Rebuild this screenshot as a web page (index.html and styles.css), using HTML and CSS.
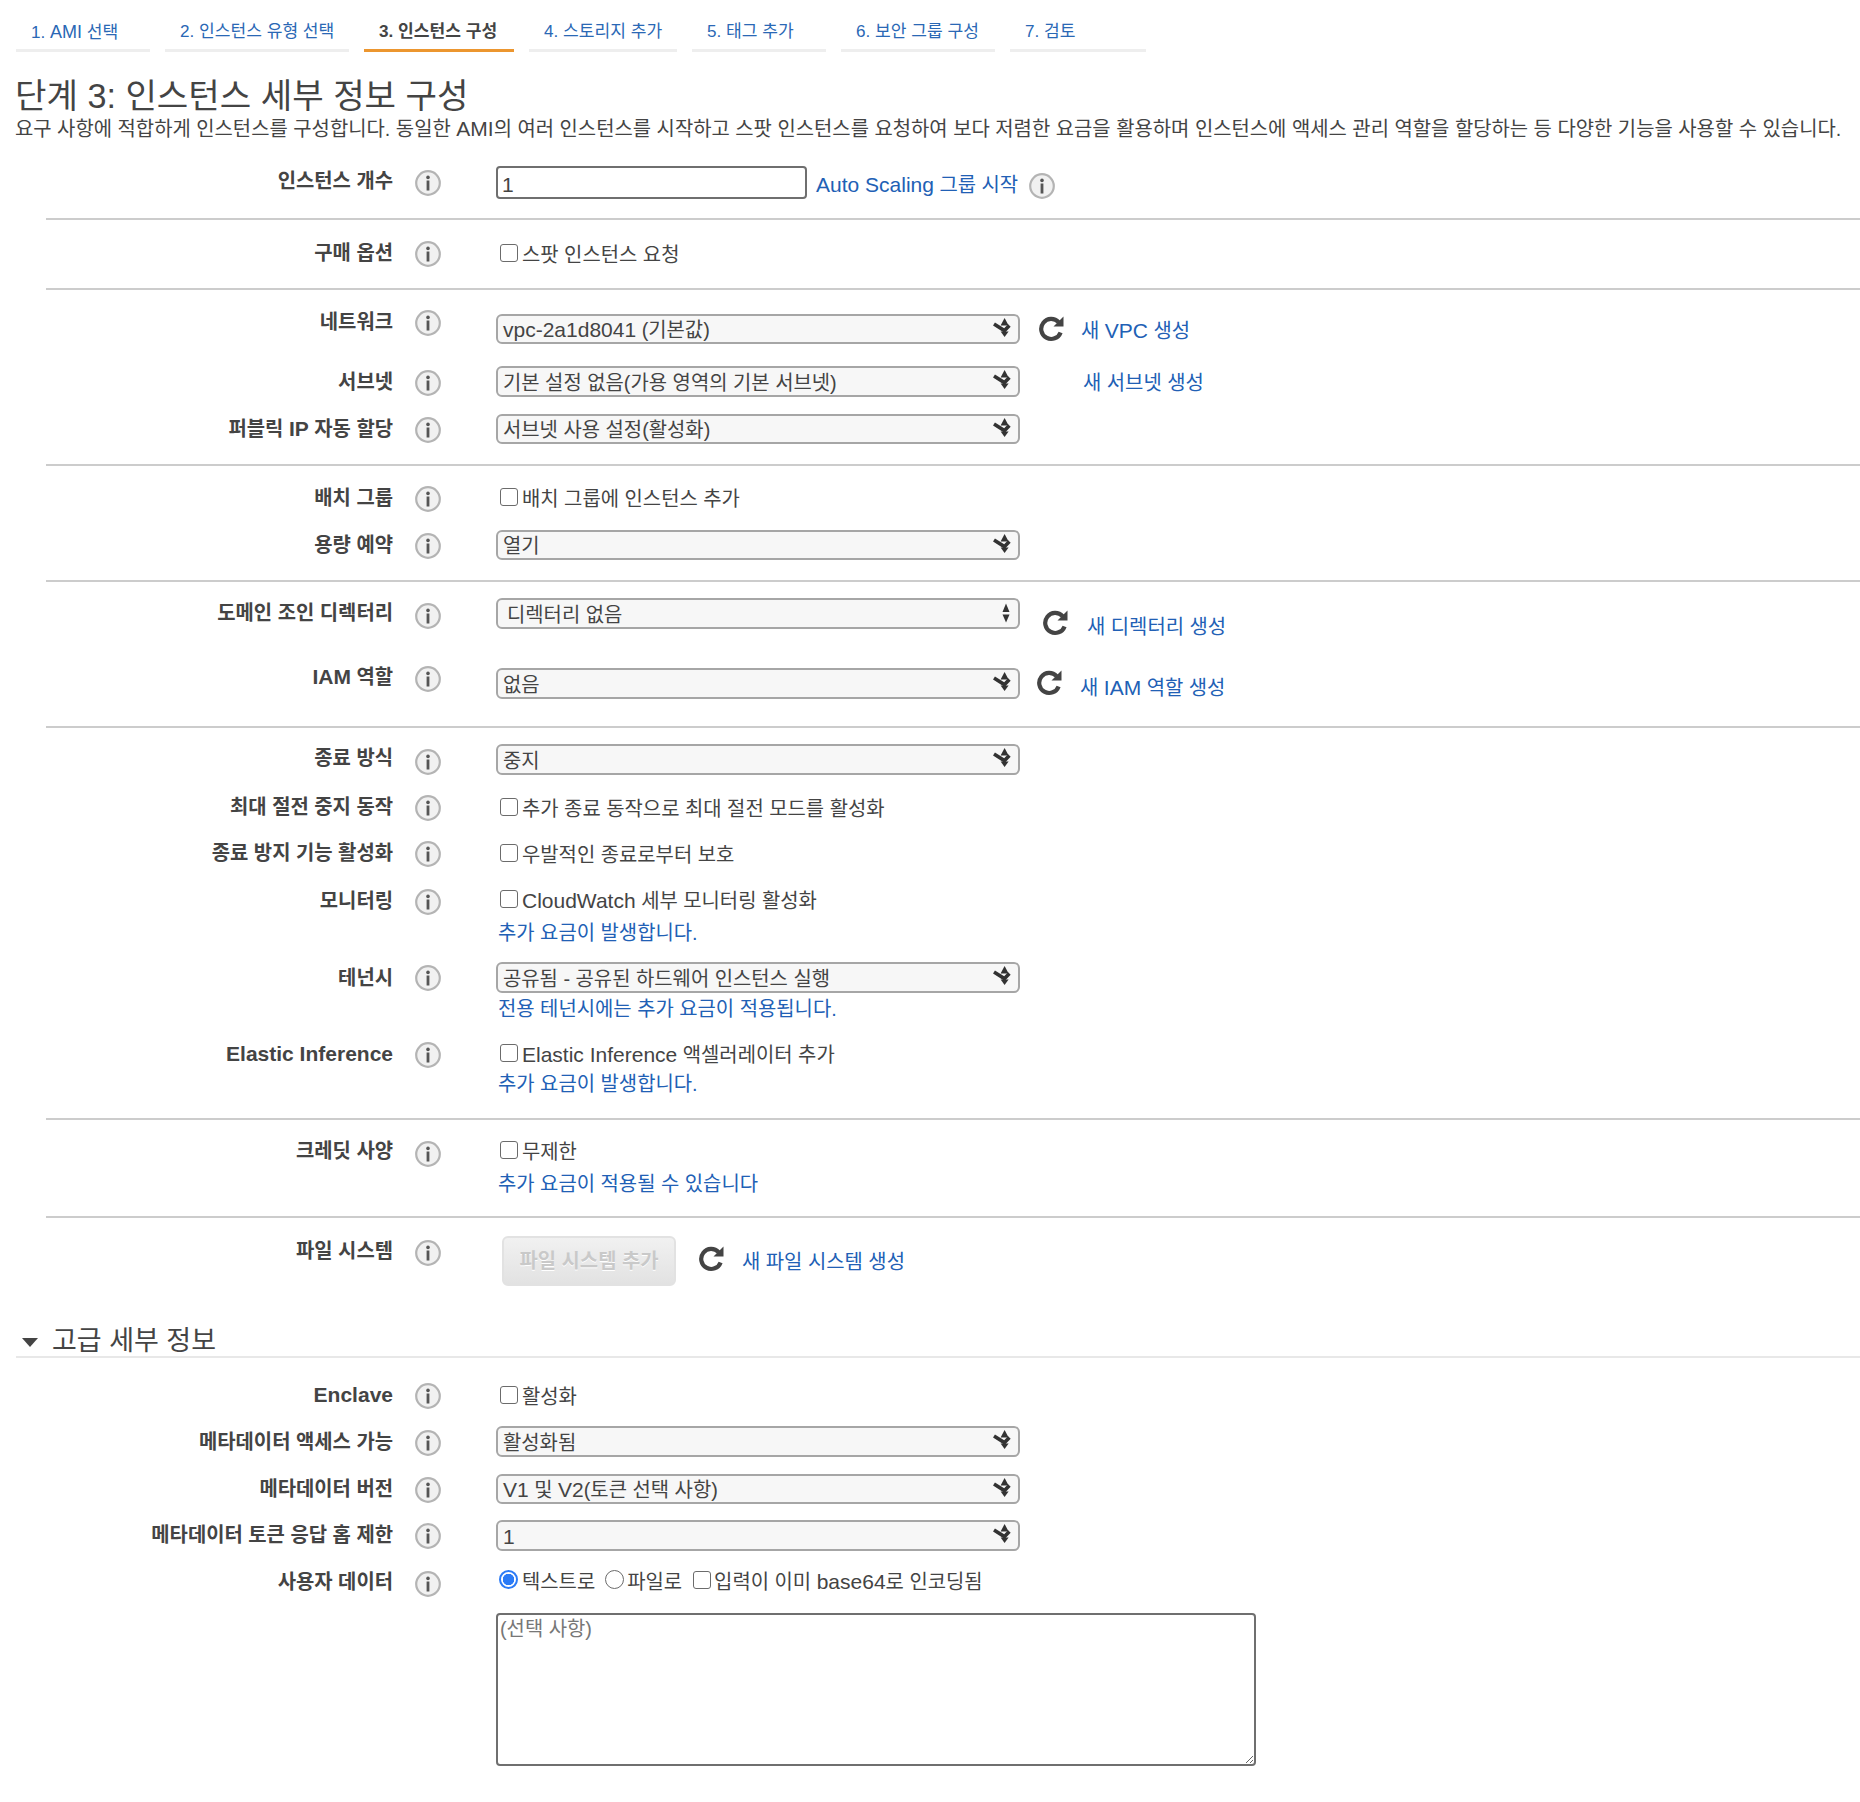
FILE: index.html
```html
<!DOCTYPE html>
<html lang="ko">
<head>
<meta charset="utf-8">
<title>인스턴스 구성</title>
<link rel="stylesheet" href="styles.css">
</head>
<body>
<svg class="defs" width="0" height="0" aria-hidden="true">
  <symbol id="info" viewBox="0 0 26 26">
    <circle cx="13" cy="13" r="11.8" fill="#f1f1f1" stroke="#b4b4b4" stroke-width="2.2"/>
    <circle cx="13" cy="7.4" r="1.8" fill="#555"/>
    <rect x="11.6" y="10.5" width="2.8" height="10" fill="#555"/>
  </symbol>
  <symbol id="refresh" viewBox="0 0 27 27">
    <path d="M20.6 7.2A10 10 0 1 0 22.6 17.4" fill="none" stroke="#444" stroke-width="4.2"/>
    <polygon points="25.5,1.5 25.5,11.5 15.5,11.5" fill="#444"/>
  </symbol>
  <symbol id="arrows" viewBox="0 0 18 19">
    <polygon points="7.6,7.4 11.6,0 15.6,7.4" fill="#333"/>
    <polygon points="7.6,13.5 15.6,13.5 11.6,19" fill="#333"/>
    <path d="M1 6L11.4 12.6L16.4 7.6" fill="none" stroke="#333" stroke-width="3.6"/>
  </symbol>
  <symbol id="updown" viewBox="0 0 8 20">
    <polygon points="0.5,9 4,0.5 7.5,9" fill="#333"/>
    <polygon points="0.5,11.5 7.5,11.5 4,19.5" fill="#333"/>
  </symbol>
</svg>

<nav class="tabs">
  <a class="tab" href="#">1. <span class="en-t">AMI</span> 선택</a>
  <a class="tab" href="#">2. 인스턴스 유형 선택</a>
  <a class="tab tab-current" href="#">3. 인스턴스 구성</a>
  <a class="tab" href="#">4. 스토리지 추가</a>
  <a class="tab" href="#">5. 태그 추가</a>
  <a class="tab" href="#">6. 보안 그룹 구성</a>
  <a class="tab" href="#">7. 검토</a>
</nav>

<header class="intro">
  <h1>단계 3: 인스턴스 세부 정보 구성</h1>
  <p>요구 사항에 적합하게 인스턴스를 구성합니다. 동일한 <span class="en">AMI</span>의 여러 인스턴스를 시작하고 스팟 인스턴스를 요청하여 보다 저렴한 요금을 활용하며 인스턴스에 액세스 관리 역할을 할당하는 등 다양한 기능을 사용할 수 있습니다.</p>
</header>

<main class="form">
  <div class="row r1">
    <div class="lab">인스턴스 개수</div>
    <svg class="ico"><use href="#info"/></svg>
    <div class="ctl inline">
      <input class="num" type="text" value="1">
      <a class="link link-as" href="#"><span class="en">Auto Scaling</span> 그룹 시작</a>
      <svg class="ico ico-as"><use href="#info"/></svg>
    </div>
  </div>
  <hr class="rule">
  <div class="row r2">
    <div class="lab">구매 옵션</div>
    <svg class="ico"><use href="#info"/></svg>
    <label class="ctl chk"><input type="checkbox"><span>스팟 인스턴스 요청</span></label>
  </div>
  <hr class="rule">
  <div class="row r3">
    <div class="lab">네트워크</div>
    <svg class="ico"><use href="#info"/></svg>
    <div class="ctl inline">
      <div class="sel" role="combobox"><span class="val"><span class="en">vpc-2a1d8041</span> (기본값)</span><svg class="arr"><use href="#arrows"/></svg></div>
      <svg class="refresh rf-net"><use href="#refresh"/></svg>
      <a class="link lk-net" href="#">새 <span class="en">VPC</span> 생성</a>
    </div>
  </div>
  <div class="row r4">
    <div class="lab">서브넷</div>
    <svg class="ico"><use href="#info"/></svg>
    <div class="ctl inline">
      <div class="sel sel-tall" role="combobox"><span class="val">기본 설정 없음(가용 영역의 기본 서브넷)</span><svg class="arr"><use href="#arrows"/></svg></div>
      <a class="link lk-sub" href="#">새 서브넷 생성</a>
    </div>
  </div>
  <div class="row r5">
    <div class="lab">퍼블릭 <span class="en">IP</span> 자동 할당</div>
    <svg class="ico"><use href="#info"/></svg>
    <div class="ctl"><div class="sel" role="combobox"><span class="val">서브넷 사용 설정(활성화)</span><svg class="arr"><use href="#arrows"/></svg></div></div>
  </div>
  <hr class="rule">
  <div class="row r6">
    <div class="lab">배치 그룹</div>
    <svg class="ico"><use href="#info"/></svg>
    <label class="ctl chk"><input type="checkbox"><span>배치 그룹에 인스턴스 추가</span></label>
  </div>
  <div class="row r7">
    <div class="lab">용량 예약</div>
    <svg class="ico"><use href="#info"/></svg>
    <div class="ctl"><div class="sel" role="combobox"><span class="val">열기</span><svg class="arr"><use href="#arrows"/></svg></div></div>
  </div>
  <hr class="rule">
  <div class="row r8">
    <div class="lab">도메인 조인 디렉터리</div>
    <svg class="ico"><use href="#info"/></svg>
    <div class="ctl inline">
      <div class="sel sel-tall sel-dir" role="combobox"><span class="val">디렉터리 없음</span><svg class="ud"><use href="#updown"/></svg></div>
      <svg class="refresh rf-dir"><use href="#refresh"/></svg>
      <a class="link lk-dir" href="#">새 디렉터리 생성</a>
    </div>
  </div>
  <div class="row r9">
    <div class="lab"><span class="en">IAM</span> 역할</div>
    <svg class="ico"><use href="#info"/></svg>
    <div class="ctl inline">
      <div class="sel sel-tall" role="combobox"><span class="val">없음</span><svg class="arr"><use href="#arrows"/></svg></div>
      <svg class="refresh rf-iam"><use href="#refresh"/></svg>
      <a class="link lk-iam" href="#">새 <span class="en">IAM</span> 역할 생성</a>
    </div>
  </div>
  <hr class="rule">
  <div class="row r10">
    <div class="lab">종료 방식</div>
    <svg class="ico"><use href="#info"/></svg>
    <div class="ctl"><div class="sel sel-tall" role="combobox"><span class="val">중지</span><svg class="arr"><use href="#arrows"/></svg></div></div>
  </div>
  <div class="row r11">
    <div class="lab">최대 절전 중지 동작</div>
    <svg class="ico"><use href="#info"/></svg>
    <label class="ctl chk"><input type="checkbox"><span>추가 종료 동작으로 최대 절전 모드를 활성화</span></label>
  </div>
  <div class="row r12">
    <div class="lab">종료 방지 기능 활성화</div>
    <svg class="ico"><use href="#info"/></svg>
    <label class="ctl chk"><input type="checkbox"><span>우발적인 종료로부터 보호</span></label>
  </div>
  <div class="row r13">
    <div class="lab">모니터링</div>
    <svg class="ico"><use href="#info"/></svg>
    <div class="ctl">
      <label class="chk"><input type="checkbox"><span><span class="en">CloudWatch</span> 세부 모니터링 활성화</span></label>
      <a class="link note note-7" href="#">추가 요금이 발생합니다.</a>
    </div>
  </div>
  <div class="row r14">
    <div class="lab">테넌시</div>
    <svg class="ico"><use href="#info"/></svg>
    <div class="ctl">
      <div class="sel sel-tall" role="combobox"><span class="val">공유됨 - 공유된 하드웨어 인스턴스 실행</span><svg class="arr"><use href="#arrows"/></svg></div>
      <a class="link note note-3" href="#">전용 테넌시에는 추가 요금이 적용됩니다.</a>
    </div>
  </div>
  <div class="row r15">
    <div class="lab"><span class="en">Elastic Inference</span></div>
    <svg class="ico"><use href="#info"/></svg>
    <div class="ctl">
      <label class="chk"><input type="checkbox"><span><span class="en">Elastic Inference</span> 액셀러레이터 추가</span></label>
      <a class="link note note-4" href="#">추가 요금이 발생합니다.</a>
    </div>
  </div>
  <hr class="rule">
  <div class="row r16">
    <div class="lab">크레딧 사양</div>
    <svg class="ico"><use href="#info"/></svg>
    <div class="ctl">
      <label class="chk"><input type="checkbox"><span>무제한</span></label>
      <a class="link note note-7" href="#">추가 요금이 적용될 수 있습니다</a>
    </div>
  </div>
  <hr class="rule">
  <div class="row r17">
    <div class="lab">파일 시스템</div>
    <svg class="ico"><use href="#info"/></svg>
    <div class="ctl inline">
      <button class="btn" type="button" disabled>파일 시스템 추가</button>
      <svg class="refresh rf-fs"><use href="#refresh"/></svg>
      <a class="link lk-fs" href="#">새 파일 시스템 생성</a>
    </div>
  </div>

  <h2 class="adv"><span class="tri"></span>고급 세부 정보</h2>

  <div class="row r18">
    <div class="lab"><span class="en">Enclave</span></div>
    <svg class="ico"><use href="#info"/></svg>
    <label class="ctl chk"><input type="checkbox"><span>활성화</span></label>
  </div>
  <div class="row r19">
    <div class="lab">메타데이터 액세스 가능</div>
    <svg class="ico"><use href="#info"/></svg>
    <div class="ctl"><div class="sel sel-tall" role="combobox"><span class="val">활성화됨</span><svg class="arr"><use href="#arrows"/></svg></div></div>
  </div>
  <div class="row r20">
    <div class="lab">메타데이터 버전</div>
    <svg class="ico"><use href="#info"/></svg>
    <div class="ctl"><div class="sel" role="combobox"><span class="val"><span class="en">V1</span> 및 <span class="en">V2</span>(토큰 선택 사항)</span><svg class="arr"><use href="#arrows"/></svg></div></div>
  </div>
  <div class="row r21">
    <div class="lab">메타데이터 토큰 응답 홉 제한</div>
    <svg class="ico"><use href="#info"/></svg>
    <div class="ctl"><div class="sel sel-tall" role="combobox"><span class="val"><span class="en">1</span></span><svg class="arr"><use href="#arrows"/></svg></div></div>
  </div>
  <div class="row r22">
    <div class="lab">사용자 데이터</div>
    <svg class="ico"><use href="#info"/></svg>
    <div class="ctl">
      <div class="choices">
        <label class="chk"><input type="radio" name="ud" checked><span>텍스트로</span></label>
        <label class="chk"><input type="radio" name="ud"><span>파일로</span></label>
        <label class="chk"><input type="checkbox"><span>입력이 이미 <span class="en">base64</span>로 인코딩됨</span></label>
      </div>
      <textarea class="ta" placeholder="(선택 사항)"></textarea>
    </div>
  </div>
</main>
</body>
</html>
```

FILE: styles.css
```css
* { box-sizing: border-box; }
html, body { margin: 0; padding: 0; background: #fff; }
body {
  font-family: "Liberation Sans", "Noto Sans CJK KR", sans-serif;
  font-size: 19.9px;
  line-height: 24px;
  color: #444;
  min-height: 1802px;
}
.defs { position: absolute; }
a { text-decoration: none; }
.en { font-size: 21px; }
.en-t { font-size: 18px; }

/* wizard tabs */
.tabs {
  display: grid;
  grid-template-columns: 134px 184px 150px 148px 134px 154px 136px;
  gap: 15px;
  margin-left: 16px;
  height: 52px;
}
.tab {
  height: 52px;
  padding: 20px 0 0 15px;
  border-bottom: 3px solid #eee;
  color: #2a68b5;
  font-size: 17.1px;
  line-height: 24px;
  white-space: nowrap;
}
.tab-current { color: #444; font-weight: 700; border-bottom-color: #ec962f; }

/* heading */
.intro { padding: 23px 0 0 15px; }
.intro h1 { margin: 0; font-size: 34.2px; line-height: 42px; font-weight: 400; color: #444; }
.intro p { margin: 0; line-height: 24px; white-space: nowrap; }

/* rows */
.form { margin-top: 19px; }
.row {
  display: grid;
  grid-template-columns: 393px 103px 1fr;
  align-items: start;
  height: var(--h);
}
.lab {
  margin-top: var(--l);
  padding-top: 1px;
  text-align: right;
  font-weight: 700;
  white-space: nowrap;
}
.ico { width: 26px; height: 26px; margin: var(--i) 0 0 22px; }
.ctl { margin-top: var(--c); }
.inline { display: flex; align-items: flex-start; position: relative; }
.rule { height: 2px; margin: 0 0 0 46px; border: 0; background: #ccc; }

.r1  { --h: 58px; --l: 8px;  --i: 10px; --c: 6px; }
.r2  { --h: 68px; --l: 20px; --i: 21px; --c: 21px; }
.r3  { --h: 62px; --l: 19px; --i: 20px; --c: 24px; }
.r4  { --h: 50px; --l: 17px; --i: 18px; --c: 14px; }
.r5  { --h: 62px; --l: 14px; --i: 15px; --c: 12px; }
.r6  { --h: 56px; --l: 19px; --i: 20px; --c: 19px; }
.r7  { --h: 58px; --l: 10px; --i: 11px; --c: 8px; }
.r8  { --h: 70px; --l: 18px; --i: 21px; --c: 16px; }
.r9  { --h: 74px; --l: 12px; --i: 14px; --c: 16px; }
.r10 { --h: 54px; --l: 17px; --i: 21px; --c: 16px; }
.r11 { --h: 46px; --l: 12px; --i: 13px; --c: 13px; }
.r12 { --h: 46px; --l: 12px; --i: 13px; --c: 13px; }
.r13 { --h: 78px; --l: 14px; --i: 15px; --c: 13px; }
.r14 { --h: 76px; --l: 13px; --i: 13px; --c: 10px; }
.r15 { --h: 90px; --l: 13px; --i: 14px; --c: 13px; }
.r16 { --h: 96px; --l: 18px; --i: 21px; --c: 18px; }
.r17 { --h: 90px; --l: 20px; --i: 22px; --c: 18px; }
.r18 { --h: 52px; --l: 24px; --i: 25px; --c: 25px; }
.r19 { --h: 54px; --l: 19px; --i: 20px; --c: 16px; }
.r20 { --h: 46px; --l: 12px; --i: 13px; --c: 10px; }
.r21 { --h: 46px; --l: 12px; --i: 13px; --c: 10px; }
.r22 { --h: 214px; --l: 13px; --i: 15px; --c: 12px; }

/* controls */
.num {
  width: 311px;
  height: 33px;
  padding: 4px 4px 0;
  border: 2px solid #6f6f6f;
  border-radius: 4px;
  background: #fff;
  color: #444;
  font: 21px/24px "Liberation Sans", "Noto Sans CJK KR", sans-serif;
}
.sel {
  position: relative;
  display: flex;
  align-items: center;
  width: 524px;
  height: 30px;
  flex: none;
  padding: 2px 30px 0 5px;
  border: 2px solid #a6a6a6;
  border-radius: 6px;
  background: #f7f7f7;
  white-space: nowrap;
}
.sel-tall { height: 31px; }
.sel-dir { padding-left: 9px; }
.arr { position: absolute; right: 7px; top: 2px; width: 18px; height: 19px; }
.ud { position: absolute; right: 8px; top: 3px; width: 8px; height: 20px; }

.chk { display: flex; align-items: center; white-space: nowrap; }
.chk > span { padding-top: 2px; }
.chk input { appearance: none; flex: none; margin: -3px 4px 0 4px; width: 18px; height: 18px; border: 1.5px solid #6b6b6b; border-radius: 3px; background: #fff; }
.chk input[type="radio"] { width: 19px; height: 19px; margin-left: 3px; border-radius: 50%; }
.chk input[type="radio"]:checked {
  border: 2px solid #2b7bf6;
  background: radial-gradient(circle, #2b7bf6 0 5.5px, #fff 6px);
}

.link { color: #2160b5; white-space: nowrap; }
.note { display: block; margin-left: 2px; padding-top: 1px; }
.note-3 { margin-top: 3px; }
.note-4 { margin-top: 4px; }
.note-7 { margin-top: 7px; }

.link-as { margin: 7px 0 0 9px; }
.ico-as { margin: 7px 0 0 11px; }
.refresh { width: 27px; height: 27px; flex: none; }
.rf-net { margin: 1px 0 0 18px; }
.lk-net { margin: 5px 0 0 16px; }
.lk-sub { margin: 5px 0 0 63px; }
.rf-dir { margin: 11px 0 0 22px; }
.lk-dir { margin: 17px 0 0 18px; }
.rf-iam { margin: 1px 0 0 16px; }
.lk-iam { margin: 8px 0 0 17px; }
.btn {
  flex: none;
  width: 174px;
  height: 50px;
  margin-left: 6px;
  padding: 0;
  border: 2px solid #e2e2e2;
  border-radius: 6px;
  background: linear-gradient(#f1f1f1, #e2e2e2);
  color: #c9c9c9;
  font: 700 19.9px/24px "Liberation Sans", "Noto Sans CJK KR", sans-serif;
  text-shadow: 0 1px 0 #fff;
}
.rf-fs { margin: 9px 0 0 22px; }
.lk-fs { margin: 14px 0 0 17px; }

/* advanced */
.adv {
  height: 50px;
  margin: 0 0 0 16px;
  padding: 17px 0 0 36px;
  position: relative;
  border-bottom: 2px solid #e8e8e8;
  font-size: 27px;
  font-weight: 400;
  line-height: 32px;
  color: #444;
}
.tri {
  position: absolute;
  left: 6px;
  top: 30px;
  border-left: 8.5px solid transparent;
  border-right: 8.5px solid transparent;
  border-top: 9px solid #444;
}

.choices { display: flex; gap: 7px; }
.choices .chk + .chk input { margin-right: 3px; }
.ta {
  display: block;
  width: 760px;
  height: 153px;
  margin-top: 19px;
  padding: 2px;
  border: 2px solid #6f6f6f;
  border-radius: 4px;
  color: #444;
  font: 19.9px/24px "Liberation Sans", "Noto Sans CJK KR", sans-serif;
}
.ta::placeholder { color: #777; }
```
